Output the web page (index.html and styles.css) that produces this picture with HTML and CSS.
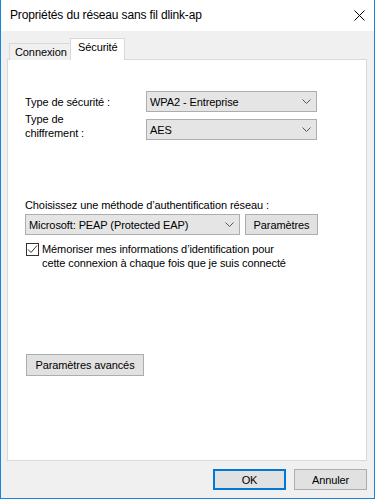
FILE: index.html
```html
<!DOCTYPE html>
<html lang="fr">
<head>
    <meta charset="UTF-8">
    <meta name="viewport" content="width=device-width, initial-scale=1.0">
    <title>Propriétés du réseau sans fil dlink-ap</title>
    <link rel="stylesheet" href="styles.css">
</head>
<body>
    <div class="window">
        <div class="titlebar">
            <span class="title">Propriétés du réseau sans fil dlink-ap</span>
            <svg class="close" width="11" height="11" viewBox="0 0 11 11">
                <path d="M0.5 0.5 L10.5 10.5 M10.5 0.5 L0.5 10.5" stroke="#000" stroke-width="1" fill="none"/>
            </svg>
        </div>

        <div class="content">
            <div class="tabs">
                <div class="tab">Connexion</div>
                <div class="tab active">Sécurité</div>
            </div>

            <div class="panel">
                <div class="type-grid">
                    <label class="field-label">Type de sécurité :</label>
                    <div class="combo combo-type">
                        <span>WPA2 - Entreprise</span>
                        <svg class="chevron" width="9" height="5" viewBox="0 0 9 5"><path d="M0.5 0.5 L4.5 4.5 L8.5 0.5" stroke="#555" fill="none"/></svg>
                    </div>
                    <label class="field-label two-lines">Type de<br>chiffrement :</label>
                    <div class="combo combo-type">
                        <span>AES</span>
                        <svg class="chevron" width="9" height="5" viewBox="0 0 9 5"><path d="M0.5 0.5 L4.5 4.5 L8.5 0.5" stroke="#555" fill="none"/></svg>
                    </div>
                </div>

                <div class="auth">
                    <div class="auth-label">Choisissez une méthode d’authentification réseau :</div>
                    <div class="auth-row">
                        <div class="combo combo-method">
                            <span>Microsoft: PEAP (Protected EAP)</span>
                            <svg class="chevron" width="9" height="5" viewBox="0 0 9 5"><path d="M0.5 0.5 L4.5 4.5 L8.5 0.5" stroke="#555" fill="none"/></svg>
                        </div>
                        <button class="btn btn-settings">Paramètres</button>
                    </div>
                    <div class="check-row">
                        <span class="checkbox">
                            <svg width="11" height="11" viewBox="0 0 11 11"><path d="M1 5.5 L4 8.5 L10 1.5" stroke="#333" stroke-width="1" fill="none"/></svg>
                        </span>
                        <span class="check-text">Mémoriser mes informations d’identification pour<br>cette connexion à chaque fois que je suis connecté</span>
                    </div>
                </div>

                <button class="btn btn-advanced">Paramètres avancés</button>
            </div>

            <div class="footer">
                <button class="btn btn-default">OK</button>
                <button class="btn">Annuler</button>
            </div>
        </div>
    </div>
</body>
</html>
```

FILE: styles.css
```css
* {
    box-sizing: border-box;
}
body {
    margin: 0;
    font-family: "Liberation Sans", Arial, sans-serif;
    font-size: 11px;
    letter-spacing: -0.1px;
    color: #000;
    background-color: #f0f0f0;
}
.window {
    height: 499px;
    border: 1px solid #1883d7;
    border-top: none;
    background-color: #f0f0f0;
}
.titlebar {
    height: 31px;
    background-color: #fff;
    display: flex;
    align-items: center;
    justify-content: space-between;
    padding: 0 9px 1px 9px;
}
.title {
    font-size: 12px;
    letter-spacing: -0.15px;
}
.close {
    margin-top: 1px;
}
.content {
    padding: 7px 7px 0 6px;
}
.tabs {
    display: flex;
    align-items: flex-end;
    height: 22px;
    margin-left: 2px;
    margin-bottom: -1px;
    position: relative;
    z-index: 1;
}
.tab {
    height: 17px;
    line-height: 16px;
    padding: 0 5px;
    border: 1px solid #d9d9d9;
    border-bottom: none;
    background-color: #f0f0f0;
    width: 62px;
}
.tab.active {
    height: 22px;
    width: 55px;
    margin-left: -1px;
    padding: 0 7px;
    line-height: 16px;
    background-color: #fff;
}
.panel {
    height: 402px;
    background-color: #fff;
    border: 1px solid #d9d9d9;
    padding: 31px 0 0 17px;
}
.type-grid {
    display: grid;
    grid-template-columns: 121px 171px;
    grid-auto-rows: 21px;
    row-gap: 7px;
}
.field-label {
    align-self: center;
    line-height: 14px;
}
.field-label.two-lines {
    align-self: end;
    margin-top: -7px;
}
.combo {
    height: 21px;
    background-color: #e5e5e5;
    border: 1px solid #adadad;
    display: flex;
    align-items: center;
    justify-content: space-between;
    padding: 0 5px 0 3px;
}
.chevron {
    flex: none;
}
.auth {
    margin-top: 58px;
}
.auth-label {
    line-height: 14px;
}
.auth-row {
    display: flex;
    gap: 5px;
    margin-top: 2px;
}
.combo-method {
    width: 215px;
}
.btn {
    height: 21px;
    font-family: inherit;
    font-size: 11px;
    letter-spacing: -0.1px;
    color: #000;
    background-color: #e1e1e1;
    border: 1px solid #adadad;
    padding: 0;
    width: 73px;
}
.check-row {
    display: flex;
    margin-top: 7px;
    margin-left: 1px;
    line-height: 14px;
}
.checkbox {
    width: 13px;
    height: 13px;
    border: 1px solid #333;
    background-color: #fff;
    margin-top: 1px;
    margin-right: 3px;
    flex: none;
    display: flex;
}
.btn-advanced {
    display: block;
    width: 118px;
    height: 22px;
    margin: 84px 0 0 1px;
}
.footer {
    display: flex;
    justify-content: flex-end;
    gap: 8px;
    padding-top: 8px;
}
.btn-default {
    border: 2px solid #0078d7;
}
```
